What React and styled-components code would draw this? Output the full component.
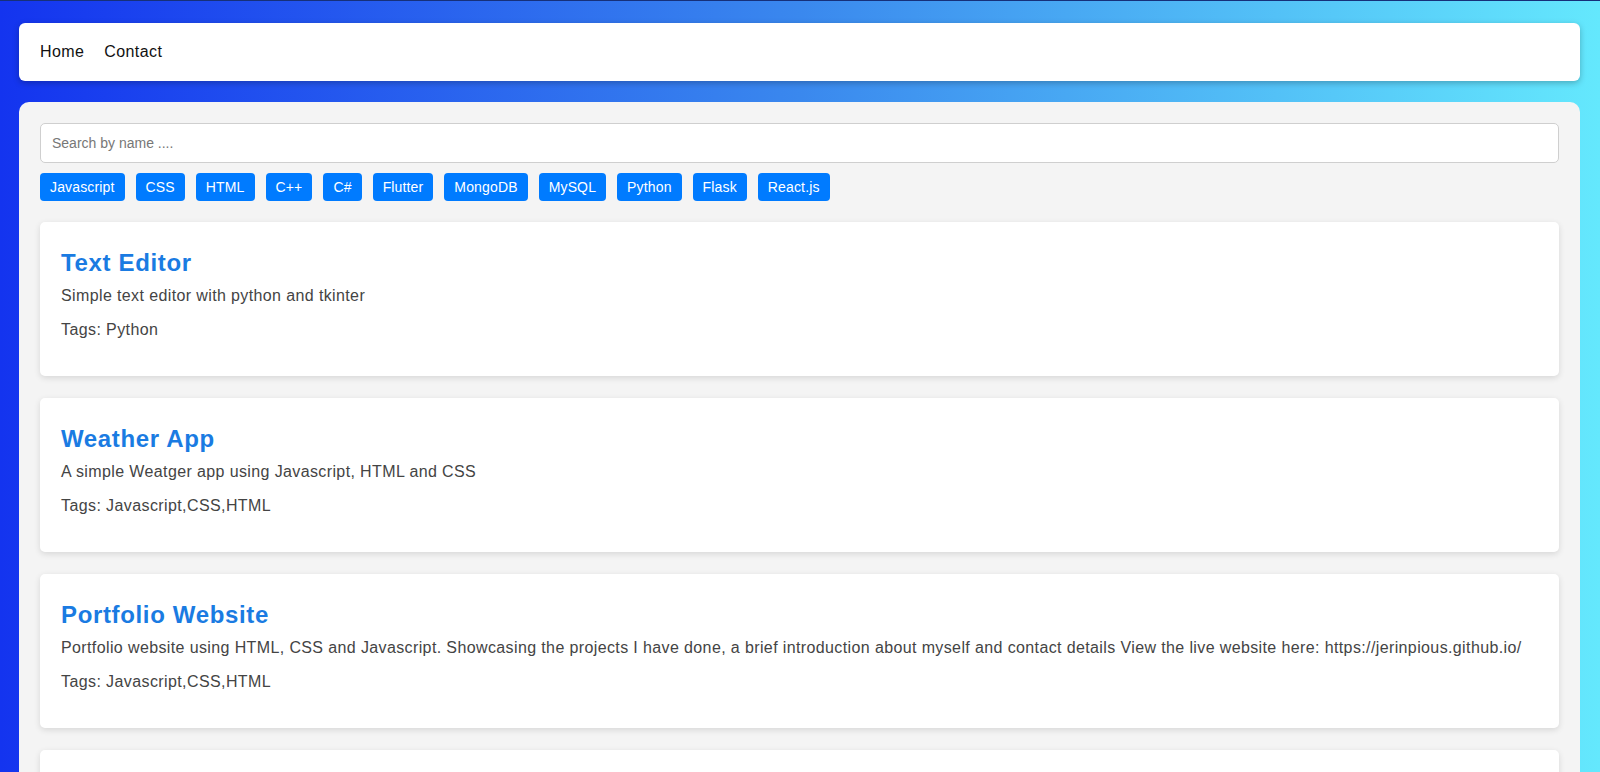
import React, { useState } from 'react'
import styled, { createGlobalStyle } from 'styled-components'

const GlobalStyle = createGlobalStyle`
  html, body {
    margin: 0;
    padding: 0;
  }
  body {
    min-height: 100vh;
    font-family: "Liberation Sans", Arial, sans-serif;
    background: linear-gradient(to right, #1434ef 0%, #3a88ee 50%, #64e8fd 100%);
    background-attachment: fixed;
    border-top: 1px solid #16307a;
    box-sizing: border-box;
  }
  * {
    box-sizing: border-box;
  }
`

const projects = [
  {
    name: 'Text Editor',
    description: 'Simple text editor with python and tkinter',
    tags: ['Python'],
  },
  {
    name: 'Weather App',
    description: 'A simple Weatger app using Javascript, HTML and CSS',
    tags: ['Javascript', 'CSS', 'HTML'],
  },
  {
    name: 'Portfolio Website',
    description:
      'Portfolio website using HTML, CSS and Javascript. Showcasing the projects I have done, a brief introduction about myself and contact details View the live website here: https://jerinpious.github.io/',
    tags: ['Javascript', 'CSS', 'HTML'],
  },
  {
    name: 'Todo List',
    description: 'A todo list app built with React.js',
    tags: ['React.js'],
  },
  {
    name: 'Blog API',
    description: 'A REST API for a blog built with Flask and MySQL',
    tags: ['Python', 'Flask', 'MySQL'],
  },
]

const filters = ['Javascript', 'CSS', 'HTML', 'C++', 'C#', 'Flutter', 'MongoDB', 'MySQL', 'Python', 'Flask', 'React.js']

const App = () => {
  const [search, setSearch] = useState('')
  const [active, setActive] = useState(null)

  const shown = projects.filter((p) => {
    if (search && !p.name.toLowerCase().includes(search.toLowerCase())) return false
    if (active && !p.tags.includes(active)) return false
    return true
  })

  return (
    <>
      <GlobalStyle />
      <Page>
        <Navbar>
          <NavLink href="#">Home</NavLink>
          <NavLink href="#">Contact</NavLink>
        </Navbar>
        <Panel>
          <SearchInput
            type="text"
            placeholder="Search by name ...."
            value={search}
            onChange={(e) => setSearch(e.target.value)}
          />
          <TagRow>
            {filters.map((t) => (
              <TagButton key={t} onClick={() => setActive(active === t ? null : t)}>
                {t}
              </TagButton>
            ))}
          </TagRow>
          <CardList>
            {shown.map((p) => (
              <Card key={p.name}>
                <Title>{p.name}</Title>
                <Description>{p.description}</Description>
                <Tags>Tags: {p.tags.join(',')}</Tags>
              </Card>
            ))}
          </CardList>
        </Panel>
      </Page>
    </>
  )
}

export default App

const Page = styled.div`
  padding: 22px 20px 20px 19px;
  display: flex;
  flex-direction: column;
  gap: 21px;
`

const Navbar = styled.nav`
  background: #fff;
  border-radius: 6px;
  box-shadow: 0 2px 6px rgba(0, 0, 0, 0.25);
  padding: 20px 21px;
  display: flex;
  gap: 20px;
`

const NavLink = styled.a`
  color: #111;
  text-decoration: none;
  font-size: 16px;
  line-height: 18px;
  letter-spacing: 0.4px;
`

const Panel = styled.main`
  background: #f4f4f4;
  border-radius: 10px;
  padding: 21px 21px 40px;
`

const SearchInput = styled.input`
  display: block;
  width: 100%;
  height: 40px;
  padding: 0 11px;
  border: 1px solid #cfcfcf;
  border-radius: 5px;
  background: #fff;
  font-family: "Liberation Sans", Arial, sans-serif;
  font-size: 14px;
  color: #333;
  outline: none;
  &::placeholder {
    color: #777;
  }
`

const TagRow = styled.div`
  display: flex;
  flex-wrap: wrap;
  gap: 11px;
  margin-top: 10px;
`

const TagButton = styled.button`
  background: #007bff;
  color: #fff;
  border: none;
  border-radius: 4px;
  height: 28px;
  padding: 0 10px;
  font-family: "Liberation Sans", Arial, sans-serif;
  font-size: 14px;
  letter-spacing: 0.15px;
  cursor: pointer;
  &:hover {
    background: #0069d9;
  }
`

const CardList = styled.div`
  display: flex;
  flex-direction: column;
  gap: 22px;
  margin-top: 21px;
`

const Card = styled.article`
  background: #fff;
  border-radius: 5px;
  box-shadow: 0 2px 6px rgba(0, 0, 0, 0.12);
  padding: 27px 21px 36px;
  min-height: 154px;
`

const Title = styled.h2`
  margin: 0 0 10px;
  font-size: 24px;
  font-weight: bold;
  line-height: 28px;
  letter-spacing: 0.65px;
  color: #1a7be2;
`

const Description = styled.p`
  margin: 0;
  font-size: 16px;
  line-height: 18px;
  letter-spacing: 0.38px;
  color: #444;
`

const Tags = styled.p`
  margin: 16px 0 0;
  font-size: 16px;
  line-height: 18px;
  letter-spacing: 0.4px;
  color: #444;
`
